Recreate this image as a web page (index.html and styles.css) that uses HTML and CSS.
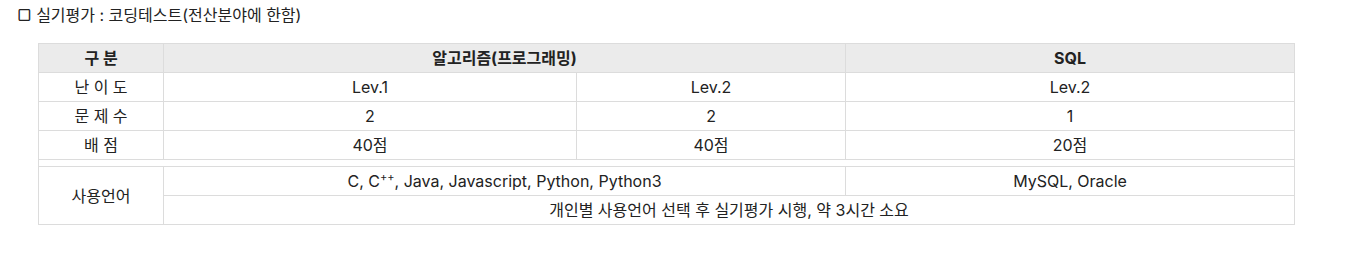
FILE: index.html
```html
<!DOCTYPE html>
<html lang="ko">
<head>
<meta charset="utf-8">
<link rel="stylesheet" href="styles.css">
</head>
<body>
<div class="page">
  <p class="title">▢ 실기평가 : 코딩테스트(전산분야에 한함)</p>
  <table class="exam">
    <colgroup>
      <col class="c1"><col class="c2"><col class="c3"><col class="c4">
    </colgroup>
    <thead>
      <tr><th>구 분</th><th colspan="2">알고리즘(프로그래밍)</th><th>SQL</th></tr>
    </thead>
    <tbody>
      <tr><td>난 이 도</td><td>Lev.1</td><td>Lev.2</td><td>Lev.2</td></tr>
      <tr><td>문 제 수</td><td>2</td><td>2</td><td>1</td></tr>
      <tr><td>배 점</td><td>40점</td><td>40점</td><td>20점</td></tr>
      <tr class="spacer"><td colspan="4"></td></tr>
      <tr><td rowspan="2">사용언어</td><td colspan="2">C, C<sup>++</sup>, Java, Javascript, Python, Python3</td><td>MySQL, Oracle</td></tr>
      <tr><td colspan="3">개인별 사용언어 선택 후 실기평가 시행, 약 3시간 소요</td></tr>
    </tbody>
  </table>
</div>
</body>
</html>
```
FILE: styles.css
```css
html, body {
  margin: 0;
  padding: 0;
  background: #fff;
}
body {
  font-family: "Inter", "Noto Sans CJK KR", sans-serif;
  color: #222;
}
.page {
  padding: 4px 0 0 17px;
}
.title {
  margin: 0;
  font-size: 16px;
  line-height: 22px;
  color: #222;
}
.exam {
  margin: 17px 0 0 21px;
  border-collapse: collapse;
  table-layout: fixed;
  width: 1257px;
  font-size: 16px;
}
.c1 { width: 125px; }
.c2 { width: 413px; }
.c3 { width: 269px; }
.c4 { width: 449px; }
.exam th, .exam td {
  border: 1px solid #dcdcdc;
  padding: 0;
  line-height: 28px;
  height: 28px;
  text-align: center;
  vertical-align: middle;
  white-space: nowrap;
}
.exam th {
  background: #ebebeb;
  font-weight: 700;
  color: #222;
}
.exam tr.spacer td {
  height: 6px;
  line-height: 0;
  font-size: 0;
}
.exam sup {
  font-size: 11px;
  line-height: 0;
  vertical-align: 6px;
}
```
